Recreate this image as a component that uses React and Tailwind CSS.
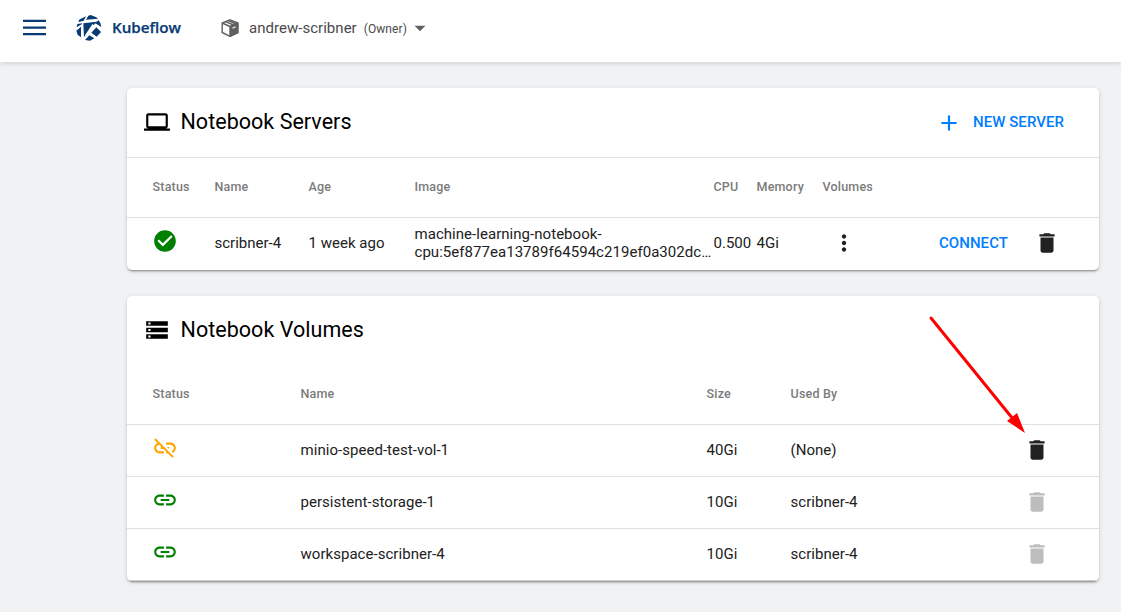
import React from 'react';
import { MdLaptop, MdStorage, MdCheckCircle, MdDelete, MdMoreVert, MdAdd, MdLink, MdLinkOff, MdArrowDropDown } from 'react-icons/md';

const Logo = () => (
  <svg className="ml-[30px] h-[26px] w-[26px] shrink-0" viewBox="0 0 78 78" fill="#083a74">
    <path d="M9 14 L30 4 L23 17 L8 21Z" />
    <path d="M30 14 L37 2 L44 0 L61 7 L66 11Z" />
    <path d="M2 37 L4 27 L18 25 L17 28Z" />
    <path d="M1 47 L15 35 L15 67 L5 59Z" />
    <path d="M22 25 L62 20 L24 66Z" />
    <path d="M68 16 L73 24 L76 36 L57 24Z" />
    <path d="M61 37 L75 51 L62 65 L46 53Z" />
    <path d="M40 61 L55 70 L42 77 L27 75Z" />
    <path d="M52 29 L30 62" stroke="#fff" strokeWidth="6" />
  </svg>
);

const Cube = () => (
  <svg className="ml-[39px] h-[20px] w-[20px] shrink-0" viewBox="0 0 20 20" fill="none" stroke="#5f6061" strokeWidth="1.4" strokeLinejoin="round">
    <path d="M10 1.8 L17.8 5 V14.5 L10 18.3 L2.2 14.5 V5Z" />
    <path d="M10 8.5 L17.8 5 V14.5 L10 18.3Z" fill="#5f6061" />
    <path d="M2.2 5 L10 8.5 M5.5 3.6 L13.5 7 M8.3 2.5 L16.2 6" />
    <path d="M12.5 10.2 L15.5 8.8" stroke="#fff" strokeWidth="1.2" />
  </svg>
);

const volumes = [
  { name: 'minio-speed-test-vol-1', size: '40Gi', used: '(None)', free: true },
  { name: 'persistent-storage-1', size: '10Gi', used: 'scribner-4', free: false },
  { name: 'workspace-scribner-4', size: '10Gi', used: 'scribner-4', free: false },
];

const card = 'w-[972px] rounded-[5px] bg-white shadow-[0_3px_1px_-2px_rgba(0,0,0,0.2),0_2px_2px_0_rgba(0,0,0,0.14),0_1px_5px_0_rgba(0,0,0,0.12)]';
const serverGrid = 'grid grid-cols-[62px_94px_106px_299px_43px_66px_116px_95px_1fr] items-center pl-[25.5px]';
const volumeGrid = 'grid grid-cols-[148px_406px_84px_233px_1fr] items-center pl-[25.5px]';
const head = 'text-[12.5px] font-medium tracking-[0.2px] text-[#7b7b7b]';

export default function App() {
  return (
    <div className="relative h-[612px] w-[1121px] overflow-hidden bg-[#f1f2f4] font-['Roboto',sans-serif] text-[#212121]">
      <header className="flex h-[62px] items-center bg-white pb-[7px] pl-[22.5px] shadow-[0_1px_5px_rgba(0,0,0,0.16)]">
        <svg className="h-[18px] w-[23px] shrink-0" viewBox="0 0 23 18" fill="#083a74">
          <path d="M0 .8H23V3.1H0ZM0 7.4H23V9.7H0ZM0 14H23V16.3H0Z" />
        </svg>
        <Logo />
        <span className="ml-[10.5px] w-[69px] whitespace-nowrap pb-px font-['Open_Sans',sans-serif] text-[15.2px] font-semibold text-[#083a74] [-webkit-text-stroke:0.25px_#083a74]">Kubeflow</span>
        <Cube />
        <span className="ml-[9px] pt-px text-[15px] tracking-[0.03px] text-[#4a4a4a]">andrew-scribner</span>
        <span className="ml-[7px] pt-[2px] text-[12px] tracking-[0.08px] text-[#4a4a4a]">(Owner)</span>
        <MdArrowDropDown className="h-[26px] w-[26px] text-[#5f6061]" />
      </header>

      <main className="flex flex-col gap-[26px] pl-[127px] pt-[26px]">
        <section className={card}>
          <div className="flex h-[69px] items-center pl-[17px] pr-[35px]">
            <MdLaptop className="mb-[2px] h-[26px] w-[26px] text-black" />
            <h2 className="ml-[10.5px] text-[21.5px] tracking-[0.03px] text-black">Notebook Servers</h2>
            <button className="ml-auto flex items-center text-[15px] font-medium tracking-[0.05px] text-[#007dfc]">
              <MdAdd className="mr-[11px] h-[26px] w-[26px]" />
              NEW SERVER
            </button>
          </div>
          <div className={`${serverGrid} ${head} h-[60px] border-t border-[#e0e0e0] pb-px`}>
            <span>Status</span><span>Name</span><span>Age</span><span>Image</span><span>CPU</span><span>Memory</span><span>Volumes</span>
          </div>
          <div className={`${serverGrid} h-[53px] border-t border-[#e0e0e0] pb-[2px] text-[15px]`}>
            <MdCheckCircle className="mb-[4px] ml-[-0.5px] h-[26px] w-[26px] text-[green]" />
            <span>scribner-4</span>
            <span className="tracking-[0.03px]">1 week ago</span>
            <span className="whitespace-nowrap leading-[18px] tracking-[0.04px]">machine-learning-notebook-<br />cpu:5ef877ea13789f64594c219ef0a302dc…</span>
            <span>0.500</span>
            <span>4Gi</span>
            <MdMoreVert className="ml-[8px] h-[26px] w-[26px]" />
            <span className="ml-[0.5px] font-medium tracking-[0.05px] text-[#007dfc]">CONNECT</span>
            <MdDelete className="h-[26px] w-[26px]" />
          </div>
        </section>

        <section className={card}>
          <div className="flex h-[68px] items-center pl-[17px]">
            <MdStorage className="h-[26px] w-[26px] text-black" />
            <h2 className="ml-[10.5px] text-[21.5px] tracking-[0.04px] text-black">Notebook Volumes</h2>
          </div>
          <div className={`${volumeGrid} ${head} h-[60px]`}>
            <span>Status</span><span>Name</span><span>Size</span><span>Used By</span>
          </div>
          {volumes.map((v) => (
            <div key={v.name} className={`${volumeGrid} h-[52px] border-t border-[#e0e0e0] text-[15px] tracking-[0.04px]`}>
              {v.free ? <MdLinkOff className="mb-[5px] ml-[-0.5px] h-[26px] w-[26px] text-[orange]" /> : <MdLink className="mb-[5px] ml-[-0.5px] h-[26px] w-[26px] text-[green]" />}
              <span>{v.name}</span>
              <span>{v.size}</span>
              <span>{v.used}</span>
              <MdDelete className={v.free ? 'mb-[2px] h-[26px] w-[26px]' : 'mb-[2px] h-[26px] w-[26px] text-[#bdbdbd]'} />
            </div>
          ))}
          <div className="h-px rounded-b-[5px] border-b border-[#d0d0d0]" />
        </section>
      </main>

      <svg className="absolute left-[926px] top-[312px] h-[124px] w-[104px]" viewBox="926 312 104 124">
        <path d="M931 318 L1013 419" stroke="red" strokeWidth="3" strokeLinecap="round" />
        <path d="M1025 433 L1007 421 L1017 413Z" fill="red" />
      </svg>
    </div>
  );
}
